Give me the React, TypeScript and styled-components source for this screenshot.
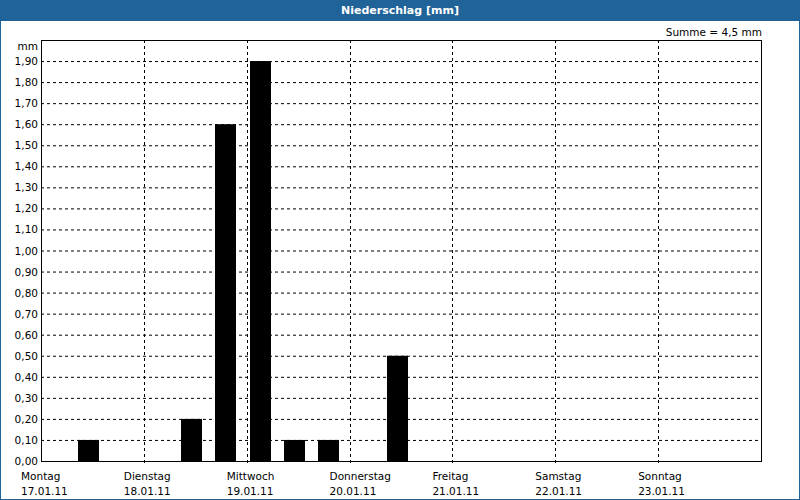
import styled, { createGlobalStyle } from 'styled-components'

const Global = createGlobalStyle`
  html, body { margin: 0; padding: 0; background: #fff; }
  body { font-family: Tahoma, "DejaVu Sans", sans-serif; }
`

const Window = styled.div`
  width: 800px;
  height: 500px;
  box-sizing: border-box;
  display: flex;
  flex-direction: column;
  border: 1px solid #1f6399;
  border-top: none;
  background: #fff;
`

const TitleBar = styled.div`
  height: 21px;
  flex: none;
  margin: 0 -1px;
  background: #1f6399;
  color: #fff;
  font-weight: bold;
  font-size: 11px;
  display: flex;
  align-items: center;
  justify-content: center;
`

const Chart = styled.svg`
  display: block;
  font-family: "DejaVu Sans", sans-serif;
  font-size: 10.5px;
`

const left = 40
const right = 760
const top = 40
const bottom = 461
const dayW = (right - left) / 7
const unit = (bottom - top) / 20

const days = [
  ['Montag', '17.01.11'],
  ['Dienstag', '18.01.11'],
  ['Mittwoch', '19.01.11'],
  ['Donnerstag', '20.01.11'],
  ['Freitag', '21.01.11'],
  ['Samstag', '22.01.11'],
  ['Sonntag', '23.01.11'],
]

const bars: [number, number][] = [
  [1, 1], [4, 2], [5, 16], [6, 19], [7, 1], [8, 1], [10, 5],
]

export default function App() {
  const oy = 21
  return (
    <>
      <Global />
      <Window>
        <TitleBar>Niederschlag [mm]</TitleBar>
        <Chart width={798} height={478} viewBox={`0 ${oy} 798 478`}>
          <text x={761} y={36} textAnchor="end">Summe = 4,5 mm</text>
          <text x={37} y={50} textAnchor="end">mm</text>
          {Array.from({ length: 19 }, (_, i) => {
            const y = bottom - (i + 1) * unit
            return (
              <line key={'h' + i} x1={left} x2={right} y1={y + 0.5} y2={y + 0.5}
                stroke="#000" strokeDasharray="3 3" />
            )
          })}
          {Array.from({ length: 6 }, (_, i) => {
            const x = Math.round(left + (i + 1) * dayW)
            return (
              <line key={'v' + i} x1={x + 0.5} x2={x + 0.5} y1={top} y2={bottom + 4}
                stroke="#000" strokeDasharray="3 3" />
            )
          })}
          {Array.from({ length: 20 }, (_, i) => {
            const y = bottom - i * unit
            return (
              <text key={'l' + i} x={37} y={y + 4} textAnchor="end">
                {(i / 10).toFixed(2).replace('.', ',')}
              </text>
            )
          })}
          {bars.map(([idx, v]) => (
            <rect key={idx} x={Math.round(left + idx * (dayW / 3) + 3)}
              y={bottom - v * unit} width={21} height={v * unit} fill="#000" />
          ))}
          <rect x={left + 0.5} y={top + 0.5} width={right - left} height={bottom - top}
            fill="none" stroke="#000" />
          {days.map(([d, dt], i) => (
            <g key={d}>
              <text x={20 + i * dayW} y={480}>{d}</text>
              <text x={20 + i * dayW} y={495}>{dt}</text>
            </g>
          ))}
        </Chart>
      </Window>
    </>
  )
}
